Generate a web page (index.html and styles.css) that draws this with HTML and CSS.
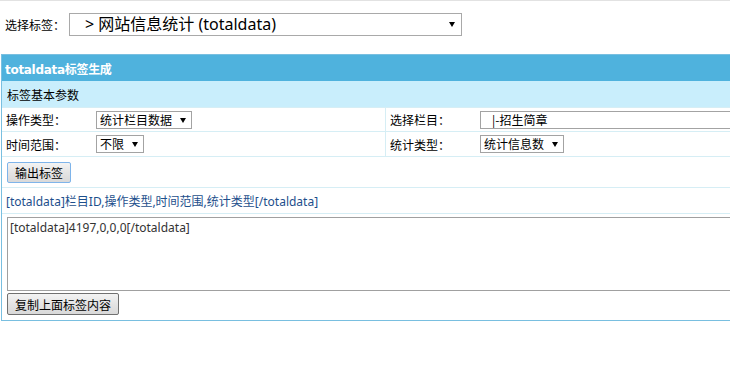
FILE: index.html
```html
<!DOCTYPE html>
<html lang="zh-CN">
<head>
    <meta charset="UTF-8">
    <title>totaldata标签生成</title>
    <link rel="stylesheet" href="styles.css">
</head>
<body>
    <!-- 标签选择 -->
    <div class="topbar">
        <label for="tagSelect" class="top-label">选择标签：</label>
        <span class="sel sel-top">
            <select id="tagSelect">
                <option>&gt; 网站信息统计 (totaldata)</option>
            </select>
        </span>
    </div>

    <table class="tag-table">
        <tr class="row-head">
            <td colspan="4">totaldata标签生成</td>
        </tr>
        <tr class="row-sub">
            <td colspan="4">标签基本参数</td>
        </tr>
        <tr class="row-field">
            <td class="col-label">操作类型：</td>
            <td class="col-value col-split">
                <span class="sel"><select><option>统计栏目数据</option></select></span>
            </td>
            <td class="col-label2">选择栏目：</td>
            <td class="col-value">
                <span class="sel sel-wide"><select><option>&nbsp;&nbsp;&nbsp;|-招生简章</option></select></span>
            </td>
        </tr>
        <tr class="row-field">
            <td class="col-label">时间范围：</td>
            <td class="col-value col-split">
                <span class="sel"><select><option>不限</option></select></span>
            </td>
            <td class="col-label2">统计类型：</td>
            <td class="col-value">
                <span class="sel"><select><option>统计信息数</option></select></span>
            </td>
        </tr>
        <tr class="row-button">
            <td colspan="4"><button type="button" class="btn btn-focus">输出标签</button></td>
        </tr>
        <tr class="row-syntax">
            <td colspan="4">[totaldata]栏目ID,操作类型,时间范围,统计类型[/totaldata]</td>
        </tr>
        <tr class="row-output">
            <td colspan="4">
                <textarea id="tagOutput" class="output">[totaldata]4197,0,0,0[/totaldata]</textarea>
                <button type="button" class="btn">复制上面标签内容</button>
            </td>
        </tr>
    </table>
</body>
</html>
```

FILE: styles.css
```css
html, body {
    overflow: hidden;
}

body {
    margin: 0;
    border-top: 1px solid #e2e2e2;
    font-family: "Liberation Sans", "Noto Sans CJK SC", sans-serif;
    font-size: 12px;
    color: #000;
    background-color: #fff;
}

/* top selector */
.topbar {
    display: flex;
    align-items: flex-start;
    box-sizing: border-box;
    height: 53px;
    padding: 12px 0 0 5px;
}

.top-label {
    width: 64px;
    line-height: 23px;
    font-family: "Noto Sans CJK SC", sans-serif;
    font-size: 12px;
}

/* select with small black arrow */
.sel {
    position: relative;
    display: inline-block;
}

.sel select {
    -webkit-appearance: none;
    appearance: none;
    box-sizing: border-box;
    height: 18px;
    margin: 0;
    padding: 0 18px 0 3px;
    border: 1px solid #a3a3a3;
    border-radius: 0;
    background-color: #fff;
    font-family: "Noto Sans CJK SC", "Liberation Sans", sans-serif;
    font-size: 12px;
    line-height: 16px;
    color: #000;
}

.sel::after {
    content: "";
    position: absolute;
    right: 6px;
    top: 7px;
    border-left: 3px solid transparent;
    border-right: 3px solid transparent;
    border-top: 5px solid #000;
    pointer-events: none;
}

.sel-top select {
    width: 393px;
    height: 23px;
    padding-left: 15px;
    font-family: "Noto Sans", "Noto Sans CJK SC", sans-serif;
    font-size: 16px;
    line-height: 21px;
    border-color: #a9a9a9;
}

.sel-top::after {
    right: 7px;
    top: 9px;
}

.sel-wide select {
    width: 600px;
}

.sel-wide::after {
    display: none;
}

/* main table */
.tag-table {
    width: 1100px;
    margin-left: 1px;
    border: 1px solid #79bfe0;
    border-spacing: 0;
}

.tag-table td {
    box-sizing: border-box;
    padding: 0 4px;
    vertical-align: middle;
    border-bottom: 1px solid #d6eef5;
}

.row-head td {
    height: 26px;
    padding-left: 3px;
    background-color: #4fb2dd;
    color: #fff;
    font-family: "DejaVu Sans", "Noto Sans CJK SC", sans-serif;
    font-weight: bold;
    font-size: 12px;
    letter-spacing: -0.3px;
    border-bottom: none;
}

.row-sub td {
    height: 27px;
    background-color: #c9eefc;
    font-family: "Noto Sans CJK SC", sans-serif;
    padding-left: 5px;
}

.row-field td {
    height: 24px;
    font-family: "Noto Sans CJK SC", sans-serif;
}

.row-field + .row-field td {
    height: 25px;
}

.col-label {
    width: 94px;
}

.col-value.col-split {
    width: 290px;
    padding-left: 2px;
    border-right: 1px solid #d6eef5;
}

.col-label2 {
    width: 94px;
}

.row-field .col-value {
    padding-left: 0;
}

.row-button td {
    height: 31px;
    padding-left: 5px;
}

.row-syntax td {
    height: 26px;
    padding-left: 4px;
    color: #1d4f8c;
    font-family: "Noto Sans", "Noto Sans CJK SC", sans-serif;
}

.row-output td {
    height: 106px;
    padding: 3px 0 5px 5px;
    vertical-align: top;
    border-bottom: none;
}

/* output box */
.output {
    display: block;
    box-sizing: border-box;
    width: 1090px;
    height: 74px;
    margin: 0 0 2px;
    padding: 1px 2px;
    border: 1px solid #a0a0a0;
    resize: none;
    font-family: "Noto Sans", "Noto Sans CJK SC", sans-serif;
    font-size: 12px;
    color: #333;
}

/* buttons */
.btn {
    box-sizing: border-box;
    height: 22px;
    padding: 0 7px;
    border: 1px solid #707070;
    border-radius: 2px;
    background: linear-gradient(#f3f3f3, #e4e4e4 50%, #d9d9d9);
    font-family: "Noto Sans CJK SC", sans-serif;
    font-size: 12px;
    color: #000;
    cursor: pointer;
}

.btn-focus {
    height: 21px;
    border-color: #7eb4ea;
}
```
